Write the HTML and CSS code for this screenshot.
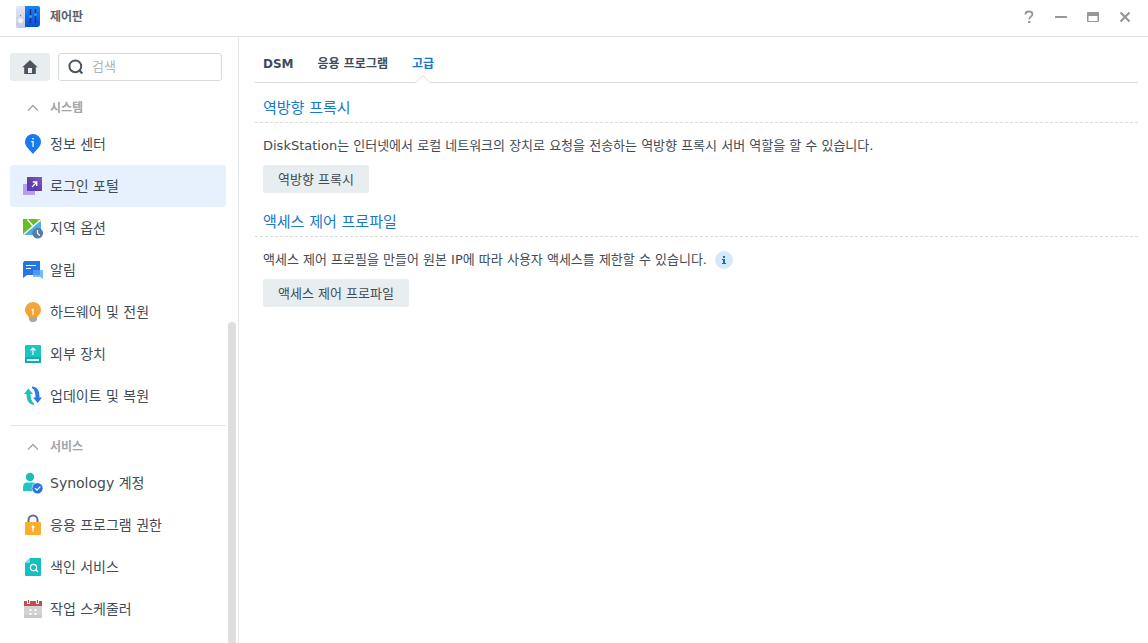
FILE: index.html
```html
<!DOCTYPE html>
<html lang="ko">
<head>
<meta charset="utf-8">
<meta name="viewport" content="width=device-width, initial-scale=1">
<title>제어판</title>
<link rel="stylesheet" href="styles.css">
</head>
<body>
<header class="titlebar">
  <svg class="app-icon" width="24" height="22" viewBox="0 0 24 22" aria-hidden="true">
    <defs>
      <linearGradient id="app-blue" x1="0" y1="0" x2="0" y2="1"><stop offset="0" stop-color="#1c86ef"/><stop offset="1" stop-color="#0a4fd6"/></linearGradient>
      <linearGradient id="app-grey" x1="0" y1="0" x2="0" y2="1"><stop offset="0" stop-color="#e4e7f1"/><stop offset="1" stop-color="#c4cbe1"/></linearGradient>
    </defs>
    <path d="M2 0h8v22H2a2 2 0 0 1-2-2V2a2 2 0 0 1 2-2z" fill="url(#app-grey)"/>
    <path d="M9 0h13a2 2 0 0 1 2 2v16a3 3 0 0 1-3 3H9z" fill="url(#app-blue)"/>
    <circle cx="4.500" cy="14.500" r="3" fill="#f3f5fb" stroke="#c3cae2" stroke-width=".6"/>
    <circle cx="4.500" cy="9.500" r=".7" fill="#7d89ad"/>
    <path d="M14.500 3v14M19.500 3v14" stroke="#07348f" stroke-width="1.400"/>
    <circle cx="14.500" cy="10.500" r="1.500" fill="#3f97f5"/>
    <circle cx="19.500" cy="8.500" r="1.500" fill="#3f97f5"/>
  </svg>
  <h1 class="title">제어판</h1>
  <div class="window-controls">
    <button class="window-button" type="button" aria-label="도움말"><svg width="12" height="14" viewBox="0 0 12 14"><path d="M2.500 4.500V4C2.500 2.300 4 1.500 6 1.500s3.500 1 3.500 2.700C9.500 6.500 6.200 6.400 6.200 9.200" fill="none" stroke="#969696" stroke-width="1.800"/><rect x="5" y="11" width="2.300" height="2" fill="#969696"/></svg></button>
    <button class="window-button" type="button" aria-label="최소화"><svg width="12" height="12" viewBox="0 0 12 12"><rect y="5" width="12" height="2" rx=".5" fill="#969696"/></svg></button>
    <button class="window-button" type="button" aria-label="최대화"><svg width="12" height="12" viewBox="0 0 12 12"><path fill-rule="evenodd" d="M1 1h10a1 1 0 0 1 1 1v8a1 1 0 0 1-1 1H1a1 1 0 0 1-1-1V2a1 1 0 0 1 1-1zm.5 4v5h9V5z" fill="#969696"/></svg></button>
    <button class="window-button" type="button" aria-label="닫기"><svg width="12" height="12" viewBox="0 0 12 12"><path d="M1.500 1.500l9 9M10.500 1.500l-9 9" stroke="#969696" stroke-width="2.200"/></svg></button>
  </div>
</header>

<div class="workspace">
  <aside class="sidebar">
    <div class="toolbar">
      <button class="home" type="button" aria-label="홈"><svg width="16" height="16" viewBox="0 0 16 16"><path fill-rule="evenodd" d="M8 1L.3 8.300h1.900V15h11.600V8.300h1.900zM6 9h4v5H6z" fill="#4b555d"/></svg></button>
      <label class="search">
        <svg width="16" height="16" viewBox="0 0 16 16" aria-hidden="true"><circle cx="7.300" cy="7.300" r="5.900" fill="none" stroke="#4b555d" stroke-width="2"/><path d="M11.300 11.300l3 3.200" stroke="#4b555d" stroke-width="2.200"/></svg>
        <input class="search-input" type="search" placeholder="검색" aria-label="검색">
      </label>
    </div>
    <nav class="menu" aria-label="제어판">
      <section class="group">
        <h2><button class="group-head" type="button"><svg width="12" height="8" viewBox="0 0 12 8"><path d="M1 6.500l5-5 5 5" fill="none" stroke="#a5a9ac" stroke-width="1.500"/></svg>시스템</button></h2>
        <a class="item" href="#info"><svg width="22" height="22" viewBox="0 0 22 22"><path d="M11 1a8 8 0 0 1 8 8c0 4.500-4 7-8 12-4-5-8-7.500-8-12a8 8 0 0 1 8-8z" fill="#197aee"/><path d="M10.300 5h1.400v1.500h-1.400zM9.300 8h2.400v6h-1.200V9.200H9.300z" fill="#fff"/></svg>정보 센터</a>
        <a class="item selected" href="#login" aria-current="page"><svg width="22" height="22" viewBox="0 0 22 22"><defs><linearGradient id="purple" x1="1" y1="0" x2="0" y2="1"><stop offset="0" stop-color="#8457c0"/><stop offset="1" stop-color="#4c2b95"/></linearGradient></defs><path d="M1 9h12v11H1z" fill="#b6a0ee"/><path d="M5 2h15v14H5z" fill="url(#purple)"/><path d="M5 9h8v7H5z" fill="#5b3db5"/><path d="M10 12l4.500-4.500M10.800 7h4v4" fill="none" stroke="#fff" stroke-width="1.300"/></svg>로그인 포털</a>
        <a class="item" href="#region"><svg width="22" height="22" viewBox="0 0 22 22"><path d="M1 2h18v16H1z" fill="#4cb0e8"/><path d="M1 2h18L1 17z" fill="#67bd21"/><path d="M14 2h5v4z" fill="#8cd341"/><path d="M19 2.500L1.500 17.500M5.500 2.500l5 6" stroke="#fff" stroke-width="1.500"/><circle cx="15.700" cy="16.200" r="5.400" fill="#557ca4"/><path d="M15.500 13v3.500l2.300 2" fill="none" stroke="#fff" stroke-width="1.300"/></svg>지역 옵션</a>
        <a class="item" href="#notice"><svg width="22" height="22" viewBox="0 0 22 22"><path d="M1 3.500L2.500 2H18v14H5l-4 3z" fill="#2476e6"/><path d="M11 11h10v9l-3-2h-7z" fill="#75bcf8"/><path d="M11 11h7v5h-7z" fill="#4e99ed"/><path d="M4 6.500h10M4 9.500h5" stroke="#fff" stroke-width="1.200"/></svg>알림</a>
        <a class="item" href="#power"><svg width="22" height="22" viewBox="0 0 22 22"><defs><linearGradient id="bulb" x1="0" y1="0" x2="0" y2="1"><stop offset="0" stop-color="#efaa4a"/><stop offset="1" stop-color="#fa9c22"/></linearGradient></defs><path d="M11 1a8 8 0 0 1 8 8c0 4-3.500 5-4 8H7c-.5-3-4-4-4-8a8 8 0 0 1 8-8z" fill="url(#bulb)"/><path d="M7 17h8v2l-2 2H9l-2-2z" fill="#a7a7a7"/><path d="M9.500 9l1.500-.5V14" fill="none" stroke="#fff" stroke-width="1.300"/></svg>하드웨어 및 전원</a>
        <a class="item" href="#external"><svg width="22" height="22" viewBox="0 0 22 22"><rect x="3" y="2" width="16" height="18" rx="1" fill="#1dc4c4"/><path d="M3 14h16v5a1 1 0 0 1-1 1H4a1 1 0 0 1-1-1z" fill="#0fadb0"/><path d="M11 12V5M8.500 7.500L11 5l2.500 2.500" fill="none" stroke="#fff" stroke-width="1.100"/><path d="M5 16h12v2H5z" fill="#e5ffff"/></svg>외부 장치</a>
        <a class="item" href="#update"><svg width="22" height="22" viewBox="0 0 22 22"><path d="M6.300 3.500L2 9h2.500c0 6 2 10 7.500 11v-1.500C9.500 16.500 8.500 13 8.500 9H11z" fill="#20bfbc"/><path d="M10 1.500c5.500.5 7.500 4 7.500 11H20L15.700 18 11 12.500h2.500c0-4-.7-8-3.500-9.500z" fill="#277ce8"/></svg>업데이트 및 복원</a>
      </section>
      <section class="group">
        <h2><button class="group-head" type="button"><svg width="12" height="8" viewBox="0 0 12 8"><path d="M1 6.500l5-5 5 5" fill="none" stroke="#a5a9ac" stroke-width="1.500"/></svg>서비스</button></h2>
        <a class="item" href="#account"><svg width="22" height="22" viewBox="0 0 22 22"><circle cx="8" cy="5" r="4.200" fill="#1abfb8"/><path d="M5 10.500h6c4 0 5 3 5 8.500H1c0-5.500 0-8.500 4-8.500z" fill="#20c6c0"/><circle cx="15.500" cy="16.300" r="5.700" fill="#fff"/><circle cx="15.500" cy="16.300" r="5.200" fill="#2476e6"/><path d="M13 16.300l2 1.800 3.300-3.500" fill="none" stroke="#fff" stroke-width="1.300"/></svg>Synology 계정</a>
        <a class="item" href="#privilege"><svg width="22" height="22" viewBox="0 0 22 22"><path d="M6.500 9V6a4.500 4.500 0 0 1 9 0V9" fill="none" stroke="#5c6f99" stroke-width="2"/><rect x="3" y="8" width="16" height="13" rx="1" fill="#f9ae2d"/><circle cx="11" cy="13" r="1.500" fill="#fff"/><path d="M11 13v4.500" stroke="#fff" stroke-width="1.200"/></svg>응용 프로그램 권한</a>
        <a class="item" href="#index"><svg width="22" height="22" viewBox="0 0 22 22"><path d="M8 2h10a1 1 0 0 1 1 1v16a1 1 0 0 1-1 1H4a1 1 0 0 1-1-1V7z" fill="#15bfc0"/><path d="M8 2v4a1 1 0 0 1-1 1H3z" fill="#76ded8"/><circle cx="11.500" cy="11.500" r="3.100" fill="none" stroke="#fff" stroke-width="1.100"/><path d="M13.500 13.500l2.500 2.500" stroke="#fff" stroke-width="1.200"/></svg>색인 서비스</a>
        <a class="item" href="#schedule"><svg width="22" height="22" viewBox="0 0 22 22"><path d="M2 7h18v13H2z" fill="#d2d3d7"/><path d="M2 17h18v3H2z" fill="#c8c9cd"/><path d="M2 3h18v5H2z" fill="#c94c4c"/><path d="M5 2h3v4H5zM14 2h3v4h-3z" fill="#fff"/><path d="M6 2h1v3H6zM15 2h1v3h-1z" fill="#a93c3c"/><path d="M7.500 11h2v2h-2zM12.500 11h2v2h-2zM7.500 15h2v2h-2zM12.500 15h2v2h-2z" fill="#fff"/></svg>작업 스케줄러</a>
      </section>
    </nav>
    <div class="scroll-thumb"></div>
  </aside>

  <main class="content">
    <nav class="tabs" aria-label="로그인 포털">
      <a class="tab" href="#dsm">DSM</a>
      <a class="tab" href="#apps">응용 프로그램</a>
      <a class="tab active" href="#advanced" aria-current="page">고급<svg class="notch" width="16" height="8" viewBox="0 0 16 8" aria-hidden="true"><path d="M0 7l1 1h14l1-1-8-7z" fill="#fff"/><path d="M0 7.500h1l7-7 7 7h1" fill="none" stroke="#d8dcdf"/></svg></a>
    </nav>
    <section class="panel">
      <h2 class="panel-title">역방향 프록시</h2>
      <div class="panel-body">
        <p class="description">DiskStation는 인터넷에서 로컬 네트워크의 장치로 요청을 전송하는 역방향 프록시 서버 역할을 할 수 있습니다.</p>
        <button class="action" type="button">역방향 프록시</button>
      </div>
    </section>
    <section class="panel">
      <h2 class="panel-title">액세스 제어 프로파일</h2>
      <div class="panel-body">
        <p class="description">액세스 제어 프로필을 만들어 원본 IP에 따라 사용자 액세스를 제한할 수 있습니다.<svg class="hint" width="18" height="18" viewBox="0 0 18 18" role="img" aria-label="정보"><circle cx="9" cy="9" r="9" fill="#d5e9fa"/><path d="M8 5h2v2H8zM7 8h3v4h1v1H7v-1h1V9H7z" fill="#0b73b8"/></svg></p>
        <button class="action" type="button">액세스 제어 프로파일</button>
      </div>
    </section>
  </main>
</div>
</body>
</html>
```
FILE: styles.css
```css
* {
  box-sizing: border-box;
}

body {
  display: flex;
  flex-direction: column;
  height: 100vh;
  margin: 0;
  background: #fff;
  color: #414b55;
  font-family: "DejaVu Sans", "Noto Sans CJK KR", sans-serif;
  font-size: 13px;
  line-height: 20px;
}

h1,
h2,
p {
  margin: 0;
}

button,
input {
  margin: 0;
  padding: 0;
  border: 0;
  background: none;
  color: inherit;
  font: inherit;
}

a {
  color: inherit;
  text-decoration: none;
}

svg {
  display: block;
  flex: none;
}

.titlebar {
  display: flex;
  flex: none;
  align-items: center;
  gap: 10px;
  height: 37px;
  padding: 0 16px 2px;
  border-bottom: 1px solid #dfe2e4;
}

.title {
  color: #59636c;
  font-size: 12px;
  font-weight: bold;
}

.window-controls {
  display: flex;
  gap: 8px;
  margin-left: auto;
  margin-right: -5px;
}

.window-button {
  display: grid;
  place-items: center;
  width: 24px;
  height: 24px;
}

.workspace {
  display: flex;
  flex: 1;
  min-height: 0;
}

.sidebar {
  position: relative;
  display: flex;
  flex: none;
  flex-direction: column;
  width: 239px;
  border-right: 1px solid #e6e8ea;
}

.toolbar {
  display: flex;
  flex: none;
  gap: 8px;
  padding: 16px 16px 10px 10px;
}

.home {
  display: grid;
  flex: none;
  place-items: center;
  width: 40px;
  height: 28px;
  border-radius: 3px;
  background: #e8edf0;
}

.search {
  display: flex;
  flex: 1;
  align-items: center;
  gap: 8px;
  min-width: 0;
  height: 28px;
  padding: 0 9px;
  border: 1px solid #d5dadd;
  border-radius: 3px;
}

.search-input {
  flex: 1;
  width: 100%;
  min-width: 0;
  outline: 0;
  appearance: none;
}

.search-input::placeholder {
  color: #b0b3b5;
}

.menu {
  flex: 1;
  min-height: 0;
  padding: 0 12px 0 10px;
  overflow: hidden;
}

.group + .group {
  margin-top: 8px;
  padding-top: 4px;
  border-top: 1px solid #e4e7e9;
}

.group-head {
  display: flex;
  align-items: center;
  gap: 11px;
  width: 100%;
  height: 32px;
  padding: 2px 17px 0;
  color: #a0a5a8;
  font-size: 12px;
  font-weight: bold;
}

.item {
  display: flex;
  align-items: center;
  gap: 6px;
  height: 42px;
  padding: 0 12px;
  border-radius: 3px;
  font-size: 14px;
}

.selected {
  background: #e6f1fd;
}

.scroll-thumb {
  position: absolute;
  top: 285px;
  right: 2px;
  bottom: 0;
  width: 8px;
  border-radius: 4px 4px 0 0;
  background: #dedede;
}

.content {
  flex: 1;
  min-width: 0;
  padding: 0 10px 16px 16px;
}

.tabs {
  display: flex;
  gap: 24px;
  height: 46px;
  margin-bottom: 9px;
  padding: 17px 8px 0;
  border-bottom: 1px solid #d8dcdf;
}

.tab {
  position: relative;
  font-size: 12px;
  font-weight: bold;
}

.active {
  color: #1878cc;
}

.notch {
  position: absolute;
  bottom: -1px;
  left: calc(50% - 8px);
}

.panel {
  margin-bottom: 13px;
}

.panel-title {
  height: 31px;
  padding: 0 8px;
  border-bottom: 1px dashed #d8dcdf;
  color: #1878cc;
  font-size: 15px;
  font-weight: normal;
  line-height: 32px;
}

.panel-body {
  padding: 9px 8px 0;
}

.description {
  display: flex;
  align-items: center;
  gap: 8px;
  min-height: 28px;
  margin-bottom: 5px;
}

.action {
  height: 28px;
  padding: 1px 15px 0;
  border-radius: 3px;
  background: #e8edf0;
}
```
